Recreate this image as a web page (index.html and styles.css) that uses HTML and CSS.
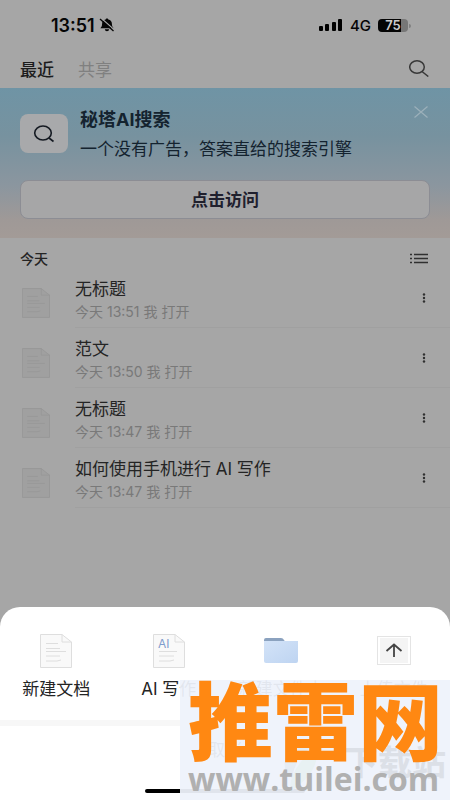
FILE: index.html
```html
<!DOCTYPE html>
<html lang="zh-CN">
<head>
<meta charset="utf-8">
<meta name="viewport" content="width=device-width, initial-scale=1">
<title>最近</title>
<link rel="stylesheet" href="styles.css">
</head>
<body>
<svg class="defs" width="0" height="0" aria-hidden="true">
  <symbol id="doc" viewBox="0 0 32 34">
    <path class="doc-page" d="M.5.5H22L31.500 8V33.500H.5Z"/>
    <path class="doc-fold" d="M22 .5V8h9.500"/>
    <path class="doc-lines" d="M6 9.500h12M6 14.500h14M6 17.500h20M6 22h14M6 27h11l4-1"/>
  </symbol>
  <symbol id="dots" viewBox="0 0 4 10">
    <circle cx="2" cy="1.500" r="1.200"/><circle cx="2" cy="5" r="1.200"/><circle cx="2" cy="8.500" r="1.200"/>
  </symbol>
</svg>

<header class="status">
  <div class="clock">13:51
    <svg width="16" height="14" viewBox="0 0 16 14"><path d="M8 .5c.8 0 1.300.5 1.300 1.100 2.400.5 3.600 2.100 3.600 4.200 0 2.500.7 3.200 1.700 4.500H1.400c1-1.300 1.700-2 1.700-4.500 0-2.100 1.200-3.700 3.600-4.200C6.700 1 7.200.5 8 .5ZM5.800 11.300h4.400c-.2 1.300-1 2-2.200 2s-2-.7-2.200-2Z" fill="#050505"/><path d="M2 0 15.500 12" stroke="#a6a6a6" stroke-width="1.200"/><path d="M1 1 14.500 13" stroke="#050505" stroke-width="1.300"/></svg>
  </div>
  <div class="signals">
    <svg width="24" height="12" viewBox="0 0 24 12"><rect y="7" width="4" height="5" rx="1"/><rect x="6" y="5" width="4" height="7" rx="1"/><rect x="13" y="3" width="4" height="9" rx="1"/><rect x="19" width="4" height="12" rx="1"/></svg>
    <span class="network">4G</span>
    <span class="battery"><span class="charge">75</span></span>
  </div>
</header>

<nav class="tabs">
  <a class="tab current" href="#recent">最近</a>
  <a class="tab" href="#shared">共享</a>
  <button class="icon-button search" aria-label="搜索">
    <svg width="20" height="17" viewBox="0 0 20 17"><ellipse cx="8" cy="7" rx="7.300" ry="6.200"/><path d="m13 11.500 6.300 5"/></svg>
  </button>
</nav>

<section class="banner">
  <div class="promo">
    <div class="promo-icon">
      <svg width="22" height="18" viewBox="0 0 22 18"><ellipse cx="10" cy="8" rx="8.300" ry="7"/><path d="m16 13 4.500 3.500"/></svg>
    </div>
    <div class="promo-text">
      <h1>秘塔AI搜索</h1>
      <p>一个没有广告，答案直给的搜索引擎</p>
    </div>
    <button class="icon-button close" aria-label="关闭">
      <svg width="14" height="12" viewBox="0 0 14 12"><path d="m.5.500 13 11M13.500.5l-13 11"/></svg>
    </button>
  </div>
  <button class="visit">点击访问</button>
</section>

<main class="files">
  <div class="group">
    <h2>今天</h2>
    <button class="icon-button" aria-label="列表视图">
      <svg width="18" height="11" viewBox="0 0 18 11"><path d="M0 1.500h2M4 1.500h14M0 5.500h2M4 5.500h14M0 9.500h2M4 9.500h14" stroke="#303030" stroke-width="1.400"/></svg>
    </button>
  </div>
  <ul>
    <li>
      <svg class="file-icon"><use href="#doc"/></svg>
      <div class="file"><h3>无标题</h3><p>今天 13:51 我 打开</p></div>
      <button class="icon-button more" aria-label="更多"><svg width="4" height="10"><use href="#dots"/></svg></button>
    </li>
    <li>
      <svg class="file-icon"><use href="#doc"/></svg>
      <div class="file"><h3>范文</h3><p>今天 13:50 我 打开</p></div>
      <button class="icon-button more" aria-label="更多"><svg width="4" height="10"><use href="#dots"/></svg></button>
    </li>
    <li>
      <svg class="file-icon"><use href="#doc"/></svg>
      <div class="file"><h3>无标题</h3><p>今天 13:47 我 打开</p></div>
      <button class="icon-button more" aria-label="更多"><svg width="4" height="10"><use href="#dots"/></svg></button>
    </li>
    <li>
      <svg class="file-icon"><use href="#doc"/></svg>
      <div class="file"><h3>如何使用手机进行 AI 写作</h3><p>今天 13:47 我 打开</p></div>
      <button class="icon-button more" aria-label="更多"><svg width="4" height="10"><use href="#dots"/></svg></button>
    </li>
  </ul>
</main>

<section class="sheet">
  <div class="actions">
    <button class="action">
      <svg class="sheet-doc" width="32" height="34"><use href="#doc"/></svg>
      新建文档
    </button>
    <button class="action">
      <svg class="sheet-doc" width="32" height="34" viewBox="0 0 32 34"><path class="doc-page" d="M.5.5H22L31.500 8V33.500H.5Z"/><path class="doc-fold" d="M22 .5V8h9.500"/><path class="doc-lines" d="M6 17.500h18M6 22h15M6 27h11l4-1"/><text x="5" y="14">AI</text></svg>
      AI 写作
    </button>
    <button class="action">
      <svg width="36" height="34" viewBox="0 0 36 34">
        <defs><linearGradient id="folder" x2="1" y2="1"><stop stop-color="#d3e3f8"/><stop offset="1" stop-color="#bed4f1"/></linearGradient></defs>
        <path d="M1 12V6q0-2 2-2h15q2 0 3 2l2 3v3Z" fill="#8ba2bf"/><path d="M1 7h34v20q0 2-2 2H3q-2 0-2-2Z" fill="url(#folder)"/></svg>
      新建文件夹
    </button>
    <button class="action">
      <svg width="34" height="34" viewBox="0 0 34 34"><rect x=".5" y="2.500" width="33" height="28" fill="#fff" stroke="#e4e4e4"/><rect x="3" y="4" width="28" height="25" fill="#f4f4f4"/><path d="M17 23V10.500M9.500 17 17 10.500l7.500 6.500" fill="none" stroke="#444" stroke-width="1.800"/></svg>
      上传文件
    </button>
  </div>
  <button class="cancel">取消</button>
  <div class="home-bar"></div>
</section>

<aside class="watermark">
  <svg class="leaf" width="50" height="60" viewBox="0 0 50 60"><path d="M5 22Q14-4 38 6 16 15 12 40 3 36 5 22Z" fill="#e6ecf3"/><path d="M36 9Q42 32 10 54 8 32 36 9Z" fill="#e8f1f3"/></svg>
  <span class="ghost">下载站</span>
  <strong>推雷网</strong>
  <span class="site">www.tuilei.com</span>
</aside>
</body>
</html>
```
FILE: styles.css
```css
* { box-sizing: border-box; }

body {
  margin: 0;
  min-height: 100vh;
  position: relative;
  display: flex;
  flex-direction: column;
  background: #a6a6a6;
  color: #242424;
  font-family: Inter, "Noto Sans CJK SC", sans-serif;
  font-size: 17px;
}

h1, h2, h3, p, ul { margin: 0; padding: 0; }
ul { list-style: none; }
svg { display: block; }
.defs { position: absolute; }

button {
  border: 0;
  padding: 0;
  background: none;
  color: inherit;
  font: inherit;
}

.icon-button { display: grid; place-items: center; }
.icon-button svg { fill: none; }

.status {
  display: flex;
  justify-content: space-between;
  align-items: center;
  height: 50px;
  padding: 0 42px 0 51px;
  color: #050505;
}

.clock { display: flex; align-items: center; gap: 4px; font-size: 18px; font-weight: 600; }
.signals { display: flex; align-items: center; gap: 7px; }
.network { font-size: 15px; font-weight: 500; }

.battery {
  position: relative;
  width: 30px;
  height: 13px;
  border-radius: 4px;
  background: linear-gradient(90deg, #050505 75%, #777 75%);
}
.battery::after {
  content: "";
  position: absolute;
  right: -3px;
  top: 5px;
  width: 2px;
  height: 4px;
  border-radius: 0 2px 2px 0;
  background: #808080;
}
.charge {
  display: block;
  color: #ccc;
  font-size: 13px;
  font-weight: 600;
  line-height: 13px;
  text-align: center;
}

.tabs {
  display: flex;
  align-items: center;
  gap: 24px;
  height: 38px;
  padding: 0 21px 2px 20px;
}
.tab { color: #808080; text-decoration: none; }
.tab.current { color: #1c1c1c; font-weight: 500; }
.search { margin-left: auto; }
.search svg { stroke: #383838; stroke-width: 1.500; }

.banner {
  height: 150px;
  padding: 16px 20px 0;
  background: linear-gradient(#6f94a5, #77929f 32%, #8b969f 65%, #9f9997 88%, #a39b97);
}
.promo { display: flex; align-items: flex-start; gap: 12px; height: 76px; }
.promo-icon {
  display: grid;
  place-items: center;
  width: 48px;
  height: 39px;
  margin-top: 10px;
  border-radius: 8px;
  background: #a8a9ab;
}
.promo-icon svg { fill: none; stroke: #151a22; stroke-width: 1.600; }
.promo-text { flex: 1; color: #14232f; }
.promo-text h1 { font-size: 18px; line-height: 32px; font-weight: 700; }
.promo-text p { font-size: 17px; line-height: 26px; white-space: nowrap; }
.close { margin: 2px 2px 0 -12px; }
.close svg { stroke: #9cb0ba; stroke-width: 1.200; }

.visit {
  width: 100%;
  height: 39px;
  padding-bottom: 2px;
  border: 1px solid #8c8d94;
  border-radius: 8px;
  background: #a6a6a7;
  color: #20202e;
  font-weight: 700;
}

.files { flex: 1; }
.group {
  display: flex;
  align-items: center;
  justify-content: space-between;
  height: 40px;
  padding: 0 22px 0 20px;
}
.group h2 { font-size: 14px; font-weight: 500; }

.files ul { margin-top: -10px; }
.files li {
  display: flex;
  align-items: center;
  height: 60px;
  padding-left: 22px;
}
.file-icon {
  width: 28px;
  height: 30px;
  margin: 10px 25px 0 0;
  fill: #a0a0a0;
  stroke: #979797;
}
.file {
  flex: 1;
  height: 60px;
  padding-top: 9px;
  border-bottom: 1px solid #a0a0a0;
}
.file h3 { font-size: 17px; line-height: 24px; font-weight: 400; }
.file p { color: #797979; font-size: 14px; line-height: 22px; }
.more {
  width: 52px;
  height: 60px;
  border-bottom: 1px solid #a0a0a0;
}
.more svg { fill: #303030; }
.doc-fold, .doc-lines { fill: none; }

.sheet {
  height: 193px;
  border-radius: 20px 20px 0 0;
  background: #fff;
  display: flex;
  flex-direction: column;
}
.actions {
  display: grid;
  grid-template-columns: repeat(4, 1fr);
  height: 119px;
  border-bottom: 6px solid #f7f7f7;
}
.action {
  display: flex;
  flex-direction: column;
  align-items: center;
  gap: 7px;
  padding-top: 27px;
  white-space: nowrap;
}
.sheet-doc { fill: #f9f9f9; stroke: #dedede; }
.sheet-doc text { fill: #7f9ccd; stroke: none; font-size: 12px; }
.cancel { height: 44px; }
.home-bar {
  width: 160px;
  height: 4px;
  margin: auto auto 7px;
  border-radius: 2px;
  background: #000;
}

.watermark {
  position: absolute;
  right: 0;
  bottom: 0;
  width: 270px;
  height: 120px;
  padding-left: 8px;
  background: rgba(238, 242, 251, 0.94);
  white-space: nowrap;
}
.watermark strong {
  position: relative;
  display: block;
  color: #ff8812;
  font-size: 85px;
  line-height: 88px;
  font-weight: 900;
}
.site {
  position: relative;
  display: block;
  color: #b0b0b0;
  font-family: "Open Sans", sans-serif;
  font-size: 32px;
  line-height: 22px;
  font-weight: 700;
}
.leaf { position: absolute; left: 100px; top: 58px; }
.ghost {
  position: absolute;
  right: 4px;
  top: 56px;
  color: #dce0e7;
  font-size: 34px;
  font-weight: 700;
}
```
